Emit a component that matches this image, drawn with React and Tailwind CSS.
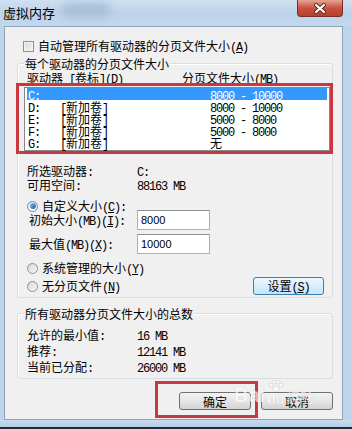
import React from 'react'

// splits a label into CJK runs (12px) and ascii runs (6px wide), '&' underlines next char
function Mix({ text }) {
  const runs = []
  let under = false
  for (const ch of text) {
    if (ch === '&') { under = true; continue }
    const kind = /[\u2E80-\uFFFF]/.test(ch) ? 'c' : 'a'
    const last = runs[runs.length - 1]
    if (last && last.kind === kind && !last.under && !under) last.s += ch
    else runs.push({ kind, s: ch, under })
    under = false
  }
  return (
    <span className="whitespace-pre">
      {runs.map((r, i) =>
        r.kind === 'c' ? (
          <span key={i} className="font-['Noto_Sans_CJK_SC',sans-serif] text-[12px]">{r.s}</span>
        ) : (
          <span key={i} className={`font-['Liberation_Mono',monospace] text-[12px] tracking-[-1.2px] ${r.under ? 'underline' : ''}`}>
            {r.s}
          </span>
        )
      )}
    </span>
  )
}

function Checkbox() {
  return (
    <span className="w-[11px] h-[11px] border border-[#8e8f8f] bg-gradient-to-br from-[#d6d6d6] to-[#f7f7f7] shadow-[inset_0_0_0_1px_#f3f3f3]" />
  )
}

function Radio({ checked }) {
  if (checked)
    return (
      <span className="w-[11px] h-[11px] rounded-full border border-[#6b88a8] bg-gradient-to-br from-[#e9eef3] to-[#ffffff] flex items-center justify-center">
        <span className="w-[6px] h-[6px] rounded-full bg-gradient-to-br from-[#8cc4f2] to-[#1a55a0]" />
      </span>
    )
  return (
    <span className="w-[11px] h-[11px] rounded-full border border-[#929292] bg-gradient-to-br from-[#d4d4d4] to-[#fbfbfb]" />
  )
}

function Group({ label, className, children }) {
  return (
    <div className={`relative border border-[#d5dfe5] rounded-[3px] shadow-[inset_1px_1px_0_#ffffff] ${className}`}>
      <span className="absolute left-[6px] top-[-7px] px-[1px] bg-[#f0f0f0] leading-[12px]">
        <Mix text={label} />
      </span>
      {children}
    </div>
  )
}

function Button({ label, hot, className = '' }) {
  return (
    <div
      className={`h-[18px] rounded-[3px] border flex items-center justify-center leading-[12px] ${
        hot
          ? 'border-[#3c7fb1] bg-gradient-to-b from-[#eef7fd] to-[#c6e5fa]'
          : 'border-[#707070] bg-gradient-to-b from-[#f3f3f3] via-[#e6e6e6] to-[#d3d3d3]'
      } ${className}`}
    >
      <Mix text={label} />
    </div>
  )
}

const drives = [
  { d: 'C:', label: '', size: '8000 - 10000', sel: true },
  { d: 'D:', label: '[新加卷]', size: '8000 - 10000' },
  { d: 'E:', label: '[新加卷]', size: '5000 - 8000' },
  { d: 'F:', label: '[新加卷]', size: '5000 - 8000' },
  { d: 'G:', label: '[新加卷]', size: '无' },
]

export default function App() {
  return (
    <div className="relative w-[352px] h-[429px] overflow-hidden flex flex-col bg-[#bfd4ea] text-black">
      {/* title bar */}
      <div className="h-[26px] flex items-start bg-gradient-to-b from-[#cfe0f2] via-[#bdd3ea] to-[#c3d8ed]">
        <span className="mt-[6px] ml-[3px] font-['Noto_Sans_CJK_SC',sans-serif] text-[13px] leading-[14px]">虚拟内存</span>
        <span className="mt-[3px] ml-[6px] w-[50px] h-[14px] rounded-full bg-[#a9bfd6] blur-[4px]" />
        <div className="ml-auto mr-[9px] w-[46px] h-[17px] rounded-b-[4px] border border-t-0 border-[#7a2e25] bg-gradient-to-b from-[#e7a494] via-[#c8503f] to-[#b8402f] flex items-center justify-center">
          <svg width="14" height="11" viewBox="0 0 14 11">
            <path d="M3 2 L11 9 M11 2 L3 9" stroke="#5a2a22" strokeWidth="4" strokeLinecap="round" />
            <path d="M3 2 L11 9 M11 2 L3 9" stroke="#ffffff" strokeWidth="2.2" strokeLinecap="round" />
          </svg>
        </div>
      </div>

      <div className="flex">
        <div className="w-[4px]" />
        {/* client area */}
        <div className="w-[339px] h-[394px] border border-[#8fa4bb] bg-[#f0f0f0] flex flex-col">
          <div className="mt-[13px] ml-[18px] h-[12px] flex items-center gap-[4px] leading-[12px]">
            <Checkbox />
            <Mix text="自动管理所有驱动器的分页文件大小(&A)" />
          </div>

          <Group className="mt-[11px] ml-[12px] w-[316px] h-[235px] flex flex-col" label="每个驱动器的分页文件大小">
            <div className="mt-[7px] h-[12px] pl-[9px] flex leading-[12px]">
              <div className="w-[155px]"><Mix text="驱动器 [卷标](&D)" /></div>
              <Mix text="分页文件大小(MB)" />
            </div>

            <div className="relative mt-[4px] ml-[6px] w-[306px] h-[64px] border border-[#828790] bg-white px-[2px]">
              {drives.map((r) => (
                <div
                  key={r.d}
                  className={`h-[12px] pl-[1px] flex leading-[12px] ${r.sel ? 'bg-[#3399ff] text-white' : ''}`}
                >
                  <div className="w-[32px]"><Mix text={r.d} /></div>
                  <div className="w-[150px]"><Mix text={r.label} /></div>
                  <Mix text={r.size} />
                </div>
              ))}
              <div className="absolute left-[-9px] top-[-5px] right-[-4px] bottom-[-4px] border-[3px] border-[#c9373f]" />
            </div>

            <div className="mt-[12px] ml-[9px] flex flex-col leading-[14px]">
              <div className="h-[14px] flex">
                <div className="w-[110px]"><Mix text="所选驱动器:" /></div>
                <Mix text="C:" />
              </div>
              <div className="h-[14px] flex">
                <div className="w-[110px]"><Mix text="可用空间:" /></div>
                <Mix text="88163 MB" />
              </div>
            </div>

            <div className="mt-[9px] ml-[9px] h-[12px] flex items-center gap-[4px] leading-[12px]">
              <Radio checked />
              <Mix text="自定义大小(&C):" />
            </div>
            <div className="mt-[-2px] ml-[11px] h-[20px] flex items-center leading-[12px]">
              <div className="w-[108px]"><Mix text="初始大小(MB)(&I):" /></div>
              <div className="w-[73px] h-[20px] border border-[#abadb3] border-t-[#8e9094] bg-white pl-[3px] flex items-center font-['Liberation_Sans',sans-serif] text-[11px]">
                8000
              </div>
            </div>
            <div className="mt-[4px] ml-[11px] h-[20px] flex items-center leading-[12px]">
              <div className="w-[108px]"><Mix text="最大值(MB)(&X):" /></div>
              <div className="w-[73px] h-[20px] border border-[#abadb3] border-t-[#8e9094] bg-white pl-[3px] flex items-center font-['Liberation_Sans',sans-serif] text-[11px]">
                10000
              </div>
            </div>
            <div className="mt-[8px] ml-[9px] h-[12px] flex items-center gap-[4px] leading-[12px]">
              <Radio />
              <Mix text="系统管理的大小(&Y)" />
            </div>
            <div className="mt-[3px] ml-[9px] mr-[8px] h-[18px] flex items-center justify-between leading-[12px]">
              <div className="flex items-center gap-[4px]">
                <Radio />
                <Mix text="无分页文件(&N)" />
              </div>
              <Button label="设置(&S)" hot className="w-[71px]" />
            </div>
          </Group>

          <Group className="mt-[15px] ml-[12px] w-[316px] h-[66px] flex flex-col" label="所有驱动器分页文件大小的总数">
            <div className="mt-[12px] ml-[9px] flex flex-col leading-[16px]">
              <div className="h-[16px] flex">
                <div className="w-[110px]"><Mix text="允许的最小值:" /></div>
                <Mix text="16 MB" />
              </div>
              <div className="h-[16px] flex">
                <div className="w-[110px]"><Mix text="推荐:" /></div>
                <Mix text="12141 MB" />
              </div>
              <div className="h-[16px] flex">
                <div className="w-[110px]"><Mix text="当前已分配:" /></div>
                <Mix text="26000 MB" />
              </div>
            </div>
          </Group>

          <div className="mt-[13px] mr-[9px] flex justify-end gap-[10px]">
            <div className="relative">
              <Button label="确定" className="w-[72px]" />
              <div className="absolute left-[-24px] top-[-11px] right-[-7px] bottom-[-8px] border-[3px] border-[#c9373f]" />
            </div>
            <Button label="取消" className="w-[72px]" />
          </div>
        </div>
      </div>

      <div className="h-[7px] bg-gradient-to-b from-[#c9dcef] to-[#b3cbe4]" />
      <div className="h-[2px] bg-[#222a33]" />

      {/* baidu watermark */}
      <div className="absolute left-[234px] top-[380px] flex items-end gap-[2px] opacity-60 text-white [text-shadow:0_0_1px_#9a9a9a]">
        <span className="font-['Liberation_Sans',sans-serif] font-bold text-[20px] leading-[22px]">Bai</span>
        <div className="flex flex-col items-center">
          <svg width="16" height="12" viewBox="0 0 16 12">
            <circle cx="3" cy="5" r="2" fill="#fff" stroke="#aaa" strokeWidth="0.5" />
            <circle cx="6.5" cy="2" r="2" fill="#fff" stroke="#aaa" strokeWidth="0.5" />
            <circle cx="10" cy="2" r="2" fill="#fff" stroke="#aaa" strokeWidth="0.5" />
            <circle cx="13" cy="5" r="2" fill="#fff" stroke="#aaa" strokeWidth="0.5" />
            <ellipse cx="8" cy="9" rx="3.5" ry="2.5" fill="#fff" stroke="#aaa" strokeWidth="0.5" />
          </svg>
          <span className="font-['Liberation_Sans',sans-serif] font-bold text-[14px] leading-[14px]">du</span>
        </div>
        <span className="font-['Noto_Sans_CJK_SC',sans-serif] text-[14px] leading-[18px]">经验</span>
      </div>
    </div>
  )
}
